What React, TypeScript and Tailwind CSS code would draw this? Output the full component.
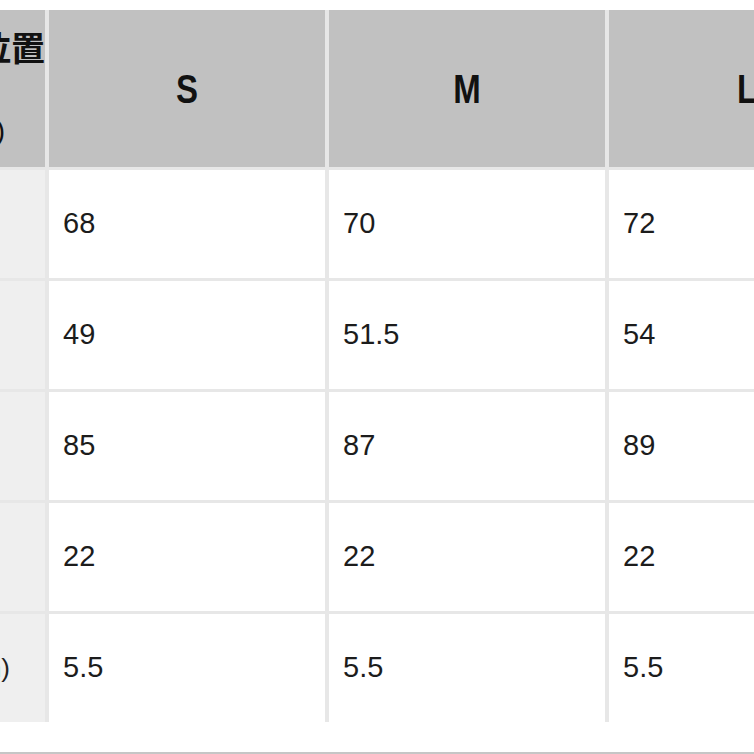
const sizes = ["S", "M", "L"]

const rows = [
  { label: "着丈", values: ["68", "70", "72"] },
  { label: "身幅", values: ["49", "51.5", "54"] },
  { label: "裄丈", values: ["85", "87", "89"] },
  { label: "袖丈", values: ["22", "22", "22"] },
  { label: "袖口(cm)", values: ["5.5", "5.5", "5.5"] },
]

export default function App() {
  return (
    <div
      className="flex h-[754px] w-[754px] flex-col overflow-hidden bg-white"
      style={{ fontFamily: '"Liberation Sans", "Noto Sans CJK JP", Arial, sans-serif' }}
    >
      <div className="h-[10px] shrink-0" />
      <div className="ml-[-85px] grid w-[970px] shrink-0 grid-cols-[130px_276px_276px_276px] grid-rows-[157px_repeat(5,108px)] gap-x-[4px] gap-y-[3px] bg-[#e7e7e7]">
        <div className="flex flex-col items-center justify-center gap-[51px] whitespace-nowrap bg-[#c1c1c1] pr-[6px] text-[#111]">
          <span className="text-[34px] font-bold leading-none">採寸位置</span>
          <span className="text-[28px] leading-none">(cm)</span>
        </div>
        {sizes.map((s) => (
          <div key={s} className="flex items-center justify-center bg-[#c1c1c1]">
            <span className="inline-block scale-y-125 text-[33px] font-bold leading-none text-[#111]">{s}</span>
          </div>
        ))}
        {rows.map((r) => (
          <>
            <div key={r.label} className="flex items-center justify-center whitespace-nowrap bg-[#efefef] pr-[44px] text-[26px] text-[#222]">
              {r.label}
            </div>
            {r.values.map((v, i) => (
              <div key={r.label + i} className="flex items-center bg-white pl-[14px] text-[29px] text-[#1c1c1c]">
                {v}
              </div>
            ))}
          </>
        ))}
      </div>
      <div className="flex-1" />
      <div className="h-[2px] shrink-0 bg-[#c6c6c6]" />
    </div>
  )
}
